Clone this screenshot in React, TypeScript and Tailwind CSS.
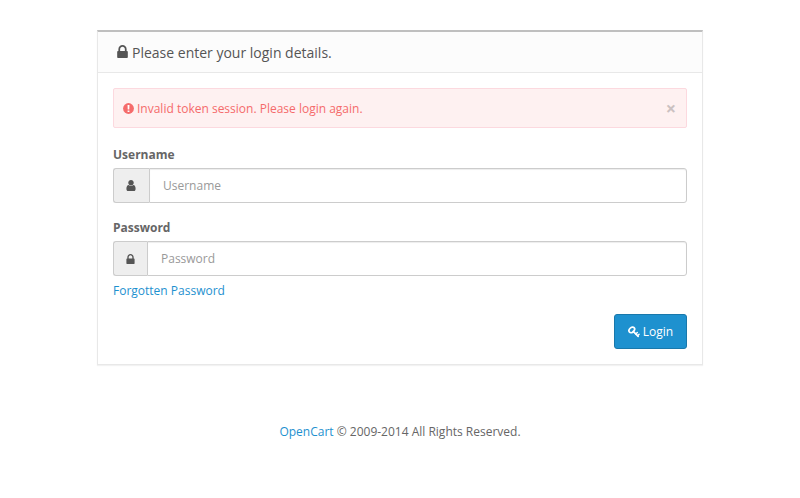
const LOCK = "M640 768h512v-192q0-106-75-181t-181-75-181 75-75 181v192zm832 96v576q0 40-28 68t-68 28h-960q-40 0-68-28t-28-68v-576q0-40 28-68t68-28h32v-192q0-184 132-316t316-132 316 132 132 316v192h32q40 0 68 28t28 68z";
const USER = "M1536 1399q0 109-62.5 187t-150.5 78h-854q-88 0-150.5-78t-62.5-187q0-85 8.5-160.5t31.5-152 58.5-131 94-89 134.5-34.5q131 128 313 128t313-128q76 0 134.5 34.5t94 89 58.5 131 31.5 152 8.5 160.5zm-256-887q0 159-112.5 271.5t-271.5 112.5-271.5-112.5-112.5-271.5 112.5-271.5 271.5-112.5 271.5 112.5 112.5 271.5z";

const LOCK_BOX = "320 128 1152 1408";

function Icon({ path, box, className }: { path: string; box: string; className: string }) {
  return (
    <svg viewBox={box} fill="currentColor" aria-hidden="true" className={`shrink-0 ${className}`}>
      <path d={path} />
    </svg>
  );
}

function AlertIcon() {
  return (
    <svg viewBox="0 0 11 11" aria-hidden="true" className="-ml-px mr-[3px] size-[11px] shrink-0">
      <circle cx="5.5" cy="5.5" r="5.4" fill="currentColor" />
      <path d="M4.55 1.9h1.9L6.3 6.5H4.7zM4.6 7.4h1.8v1.7H4.6z" fill="#fff" />
    </svg>
  );
}

function KeyIcon() {
  return (
    <svg viewBox="0 0 12 12" fill="none" stroke="currentColor" aria-hidden="true" className="h-[12px] w-[12px] shrink-0">
      <ellipse cx="3.8" cy="3.9" rx="3.2" ry="2.3" transform="rotate(-45 3.8 3.9)" strokeWidth="1.7" />
      <path d="M5.2 5.3 10.2 10.4" strokeWidth="1.7" strokeLinecap="round" />
      <path d="M7.8 8.1 9.3 6.6M9.6 9.8 11.1 8.3" strokeWidth="1.4" strokeLinecap="round" />
    </svg>
  );
}

type FieldProps = { label: string; path: string; box: string; iconClass: string; type: string; addonClass: string };

function Field({ label, path, box, iconClass, type, addonClass }: FieldProps) {
  return (
    <div>
      <label className="block h-[22px] font-bold leading-[17px]">{label}</label>
      <div className="flex h-[35px]">
        <span className={`flex items-center rounded-l-[3px] border border-r-0 border-[#cccccc] bg-[#eeeeee] pl-[12px] text-[#555] ${addonClass}`}>
          <Icon path={path} box={box} className={iconClass} />
        </span>
        <input type={type} placeholder={label} className="min-w-0 flex-1 rounded-r-[3px] border border-[#cccccc] bg-white px-[13px] text-[12px] shadow-[inset_0_1px_1px_rgba(0,0,0,0.075)] outline-none placeholder:text-[#999]" />
      </div>
    </div>
  );
}

export default function App() {
  return (
    <div className="flex h-[498px] flex-col items-center bg-white pt-[30px] font-['Open_Sans',sans-serif] text-[12px] leading-[17px] text-[#666666]">
      <main className="h-[335px] w-[606px] border border-t-2 border-[#e8e8e8] border-t-[#bfbfbf] bg-white shadow-[0_1px_1px_rgba(0,0,0,0.05)]">
        <header className="flex h-[41px] items-center border-b border-[#e8e8e8] bg-[#fcfcfc] pl-[19px] text-[#555555]">
          <Icon path={LOCK} box={LOCK_BOX} className="mb-px mr-[4px] h-[13px] w-[11px]" />
          <h1 className="text-[14px]">Please enter your login details.</h1>
        </header>
        <div className="px-[15px] pt-[15px]">
          <div className="flex h-[40px] items-center rounded-[2px] border border-[#fcd9df] bg-[#fef1f1] px-[10px] text-[#f56b6b]">
            <AlertIcon />
            <span>Invalid token session. Please login again.</span>
            <button className="ml-auto text-[18px] font-bold text-[#cbc1c1]">×</button>
          </div>
          <form className="mt-[18px]">
            <Field label="Username" type="text" path={USER} box="256 128 1280 1536" iconClass="h-[11px] w-[10px]" addonClass="w-[36px]" />
            <div className="h-[16px]" />
            <Field label="Password" type="password" path={LOCK} box={LOCK_BOX} iconClass="h-[10px] w-[9px]" addonClass="w-[34px]" />
            <a className="mt-[6px] block text-[#1e91cf]">Forgotten Password</a>
            <button type="button" className="ml-auto mt-[15px] flex h-[35px] w-[73px] items-center justify-center gap-[3px] rounded-[3px] border border-[#1978ab] bg-[#1e91cf] text-white">
              <KeyIcon />
              Login
            </button>
          </form>
        </div>
      </main>
      <footer className="mt-[58px]"><a className="text-[#1e91cf]">OpenCart</a> © 2009-2014 All Rights Reserved.</footer>
    </div>
  );
}
